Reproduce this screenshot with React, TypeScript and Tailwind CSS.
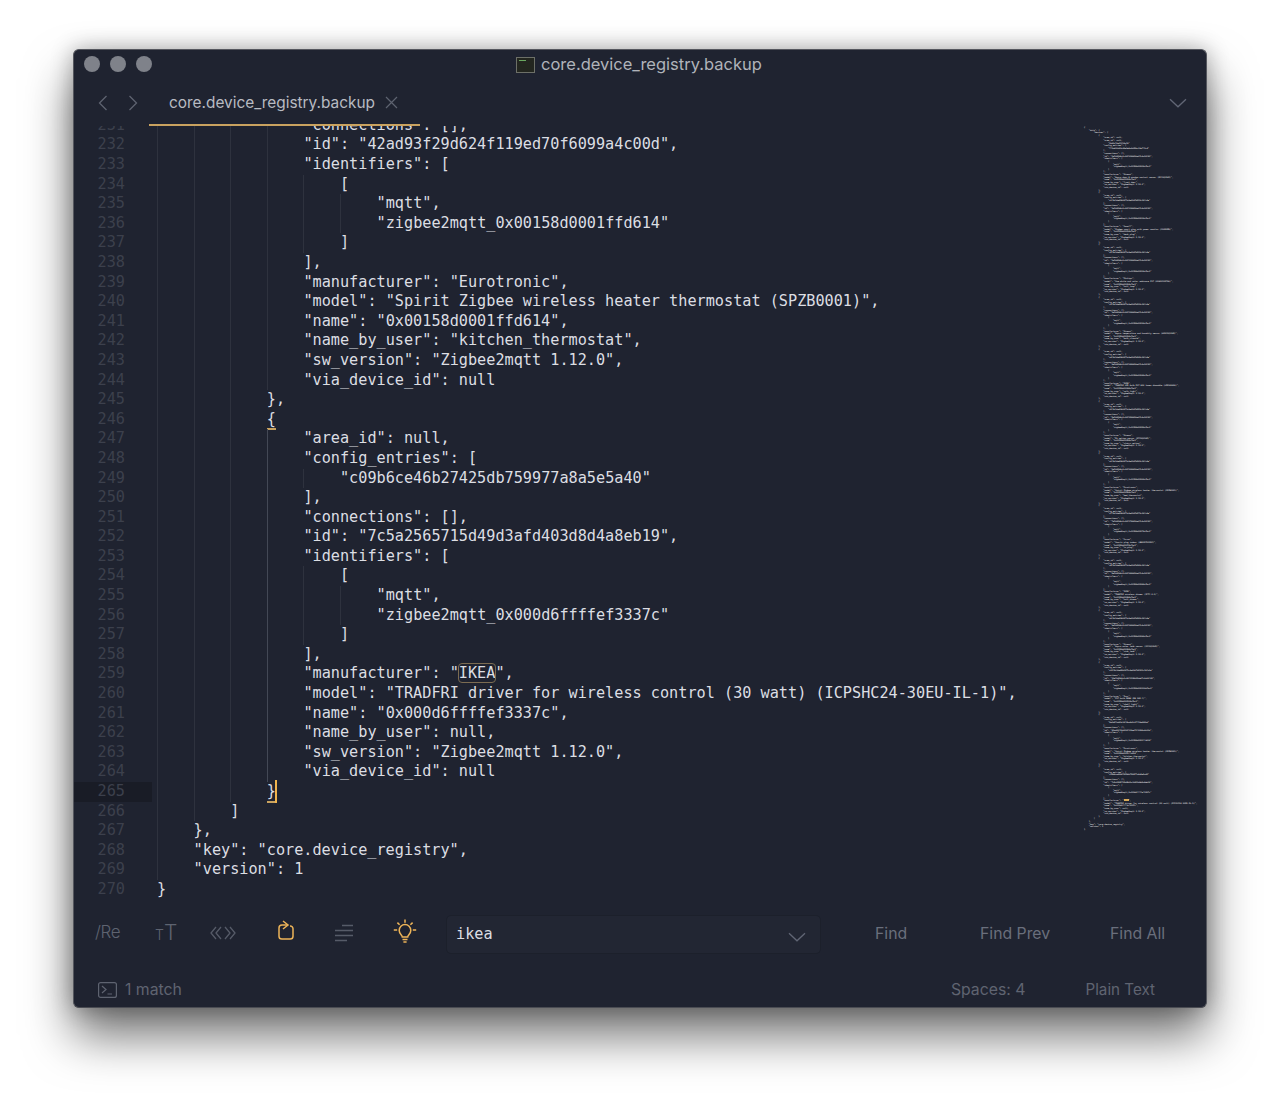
import React from 'react';

type Line = { indent: number; text: string };

interface Device {
  config: string;
  id: string;
  ident: string;
  manufacturer: string;
  model: string;
  name: string;
  byUser: string;
  version: string;
}

const filler: [string, string, string][] = [
  ['Xiaomi', 'Aqara door & window contact sensor (MCCGQ11LM)', 'front_door'],
  ['Sonoff', 'Zigbee smart plug with power monitor (S26R2ZB)', 'desk_plug'],
  ['Philips', 'Hue white and color ambiance E27 (9290012573A)', 'hall_lamp'],
  ['Xiaomi', 'Aqara temperature and humidity sensor (WSDCGQ11LM)', 'bath_climate'],
  ['IKEA', 'TRADFRI LED bulb E27 806 lumen dimmable (LED1836G9)', 'sofa_light'],
  ['Xiaomi', 'Mi motion sensor (RTCGQ01LM)', 'stairs_motion'],
  ['Eurotronic', 'Spirit Zigbee wireless heater thermostat (SPZB0001)', 'bed_thermostat'],
  ['Osram', 'Smart+ plug indoor (AB3257001NJ)', 'tv_plug'],
  ['IKEA', 'TRADFRI wireless dimmer (ICTC-G-1)', 'hall_dimmer'],
  ['Xiaomi', 'Aqara water leak sensor (SJCGQ11LM)', 'sink_leak'],
  ['Innr', 'E27 bulb RGBW (RB 285 C)', 'shelf_light'],
];

const devices: Device[] = [
  ...filler.map(([manufacturer, model, byUser], i) => ({
    config: `a${i}f4c1de83b2471c9e60d7b5${i}2c18fa3e`,
    id: `${i}e7d40b9a1c64f2${i}8b35de07c9a16f42`,
    ident: `zigbee2mqtt_0x00158d000${i}4a7bc2`,
    manufacturer,
    model,
    name: `0x00158d000${i}4a7bc2`,
    byUser: `"${byUser}"`,
    version: 'Zigbee2mqtt 1.12.0',
  })),
];
devices[11] = {
  config: '5e1d07ab93c24f6ba8d2c37f10e946bd',
  id: '42ad93f29d624f119ed70f6099a4c00d',
  ident: 'zigbee2mqtt_0x00158d0001ffd614',
  manufacturer: 'Eurotronic',
  model: 'Spirit Zigbee wireless heater thermostat (SPZB0001)',
  name: '0x00158d0001ffd614',
  byUser: '"kitchen_thermostat"',
  version: 'Zigbee2mqtt 1.12.0',
};
devices[12] = {
  config: 'c09b6ce46b27425db759977a8a5e5a40',
  id: '7c5a2565715d49d3afd403d8d4a8eb19',
  ident: 'zigbee2mqtt_0x000d6ffffef3337c',
  manufacturer: 'IKEA',
  model: 'TRADFRI driver for wireless control (30 watt) (ICPSHC24-30EU-IL-1)',
  name: '0x000d6ffffef3337c',
  byUser: 'null',
  version: 'Zigbee2mqtt 1.12.0',
};

const deviceLines = (d: Device, last: boolean): Line[] => [
  { indent: 12, text: '{' },
  { indent: 16, text: '"area_id": null,' },
  { indent: 16, text: '"config_entries": [' },
  { indent: 20, text: `"${d.config}"` },
  { indent: 16, text: '],' },
  { indent: 16, text: '"connections": [],' },
  { indent: 16, text: `"id": "${d.id}",` },
  { indent: 16, text: '"identifiers": [' },
  { indent: 20, text: '[' },
  { indent: 24, text: '"mqtt",' },
  { indent: 24, text: `"${d.ident}"` },
  { indent: 20, text: ']' },
  { indent: 16, text: '],' },
  { indent: 16, text: `"manufacturer": "${d.manufacturer}",` },
  { indent: 16, text: `"model": "${d.model}",` },
  { indent: 16, text: `"name": "${d.name}",` },
  { indent: 16, text: `"name_by_user": ${d.byUser},` },
  { indent: 16, text: `"sw_version": "${d.version}",` },
  { indent: 16, text: '"via_device_id": null' },
  { indent: 12, text: last ? '}' : '},' },
];

const lines: Line[] = [
  { indent: 0, text: '{' },
  { indent: 4, text: '"data": {' },
  { indent: 8, text: '"devices": [' },
  { indent: 12, text: '{' },
  { indent: 16, text: '"area_id": null,' },
  ...deviceLines(devices[0], false).slice(1, 3),
  { indent: 20, text: '"7f3ab10d92c44e1e8a6d05bc31e7f2c4"' },
  ...deviceLines(devices[0], false).slice(4),
  ...devices.slice(1).flatMap((d, i) => deviceLines(d, i === devices.length - 2)),
  { indent: 8, text: ']' },
  { indent: 4, text: '},' },
  { indent: 4, text: '"key": "core.device_registry",' },
  { indent: 4, text: '"version": 1' },
  { indent: 0, text: '}' },
];

// keep file length at 270 whatever the first block ends up as
while (lines.length < 270) lines.splice(6, 0, { indent: 20, text: '"2b90c7de11f04a7d"' });

const FIRST_VISIBLE = 231;
const ACTIVE = 265;

const CodeText = ({ no, text }: { no: number; text: string }) => {
  if (no === 246) {
    return <span className="inline-block h-[20px] border-b-2 border-[#c9a25f] leading-[19px]">{text}</span>;
  }
  if (no === ACTIVE) {
    return (
      <span className="relative inline-block h-[21px] border-b-2 border-[#c9a25f] leading-[19px]">
        {text}
        <span className="absolute right-[-1px] top-[-2px] h-[23px] w-[2px] bg-[#f0b44e]" />
      </span>
    );
  }
  if (no === 259) {
    return (
      <>
        {'"manufacturer": "'}
        <span className="rounded-[3px] outline outline-1 outline-[#7c6c52]">IKEA</span>
        {'",'}
      </>
    );
  }
  return <>{text}</>;
};

const CodeRow = ({ line, no }: { line: Line; no: number }) => {
  const levels = Array.from({ length: line.indent / 4 });
  return (
    <div className="flex h-[19.6px] leading-[19.6px] whitespace-pre">
      <div
        className={`w-[78px] shrink-0 pr-[27px] text-right text-[#3c404c] ${no === ACTIVE ? 'bg-[#191c26]' : ''}`}
      >
        {no}
      </div>
      <div className="w-[5px] shrink-0" />
      {levels.map((_, i) => (
        <span
          key={i}
          className={`h-full w-[36.6px] shrink-0 border-l ${
            i === 3 && no > 246 && no < 265 ? 'border-[#434855]' : 'border-[#2e323e]'
          }`}
        />
      ))}
      <span>
        <CodeText no={no} text={line.text} />
      </span>
    </div>
  );
};

const Minimap = () => (
  <div aria-hidden className="w-[122px] shrink-0 font-['DejaVu_Sans_Mono',monospace] text-[2px] text-white">
    {lines.map((l, i) => (
      <div key={i} className="h-[2.62px] leading-[2.62px] whitespace-pre">
        {' '.repeat(l.indent)}
        {i + 1 === 259 ? (
          <>
            {'"manufacturer": "'}
            <span className="bg-[#d9a956] text-[#d9a956]">IKEA</span>
            {'",'}
          </>
        ) : (
          l.text
        )}
      </div>
    ))}
  </div>
);

const Chevron = ({ className = '' }: { className?: string }) => (
  <svg width="18" height="10" viewBox="0 0 18 10" fill="none" stroke="#616675" strokeWidth="1.3" className={className}>
    <path d="M1 1.2 9 8.8 17 1.2" />
  </svg>
);

const ToolIcons = () => (
  <>
    <span className="w-[24px] text-[17px] font-light tracking-[-0.4px] text-[#5e6370]">/Re</span>
    <span className="ml-[36px] flex w-[20px] items-baseline font-light text-[#5e6370]">
      <span className="text-[14px]">T</span>
      <span className="text-[21px] leading-none">T</span>
    </span>
    <svg width="26" height="16" viewBox="0 0 26 16" fill="none" stroke="#565b68" strokeWidth="1.3" className="ml-[35px]">
      <path d="M6 2 1 8l5 6M11 2 6 8l5 6M15 2l5 6-5 6M20 2l5 6-5 6" />
    </svg>
    <svg width="18" height="21" viewBox="0 0 18 21" fill="none" stroke="#edb458" strokeWidth="1.5" className="ml-[41px] mb-[5px]">
      <path d="M13 6h.2A2.8 2.8 0 0 1 16 8.8v7.4a2.8 2.8 0 0 1-2.8 2.8H4.8A2.8 2.8 0 0 1 2 16.2V8a3 3 0 0 1 3-3h6" />
      <path d="M6 1l5 4-5 4" />
    </svg>
    <svg width="18" height="18" viewBox="0 0 18 18" fill="none" stroke="#565b68" strokeWidth="1.3" className="ml-[40px]">
      <path d="M7 1.5h11M0 6.5h18M0 11.5h18M0 16.5h12" />
    </svg>
    <svg width="24" height="25" viewBox="0 0 24 25" fill="none" stroke="#edb458" strokeWidth="1.5" className="ml-[40px] mb-[3px]">
      <path d="M12 .5v3.2M4.4 3.6l2.2 2.2M19.6 3.6l-2.2 2.2M.8 11h3.4M19.8 11h3.4" />
      <path d="M9.3 18c0-2-3.1-3-3.1-6.6a5.8 5.8 0 0 1 11.6 0c0 3.6-3.1 4.6-3.1 6.6Z" />
      <path d="M9.5 20.4h5M10.4 23h3.2" />
    </svg>
  </>
);

export default function App() {
  const visible = lines.slice(FIRST_VISIBLE - 1, 270);

  return (
    <div className="min-h-[1105px] overflow-hidden bg-white px-[73px] pt-[49px] font-['Inter',sans-serif]">
      <div className="flex h-[959px] flex-col overflow-hidden rounded-[6px] border border-[#55575e] border-b-[#4a4c53] bg-[#1f2330] shadow-[0_28px_48px_rgba(0,0,0,0.55),0_0_22px_rgba(0,0,0,0.3)]">
        {/* title bar */}
        <div className="flex h-[33px] shrink-0 items-center pb-[4px] pl-[10px]">
          <div className="mb-[2px] flex w-[86px] shrink-0 gap-[10px]">
            <span className="h-[16px] w-[16px] rounded-full bg-[#7f828a]" />
            <span className="h-[16px] w-[16px] rounded-full bg-[#7f828a]" />
            <span className="h-[16px] w-[16px] rounded-full bg-[#7f828a]" />
          </div>
          <div className="ml-[346px] flex items-center gap-[6px] text-[16.5px] text-[#b0b3ba]">
            <span className="flex h-[16px] w-[19px] items-start border border-[#6d7068] bg-[#23261f] px-[2px] pt-[2px]">
              <span className="h-[1px] w-[7px] bg-[#6aa860]" />
            </span>
            core.device_registry.backup
          </div>
        </div>

        {/* tabs */}
        <div className="flex h-[43px] shrink-0 items-center">
          <svg width="10" height="16" viewBox="0 0 10 16" fill="none" stroke="#5e6370" strokeWidth="1.3" className="mb-[4px] ml-[24px]">
            <path d="M8.5 1 1.5 8l7 7" />
          </svg>
          <svg width="10" height="16" viewBox="0 0 10 16" fill="none" stroke="#5e6370" strokeWidth="1.3" className="mb-[4px] ml-[20px]">
            <path d="M1.5 1l7 7-7 7" />
          </svg>
          <div className="ml-[11px] flex h-full w-[271px] items-center border-b-[2.5px] border-[#c9a25f] pb-[2px] pl-[20px] text-[15.4px] text-[#b8bbc2]">
            core.device_registry.backup
            <svg width="13" height="13" viewBox="0 0 13 13" fill="none" stroke="#5e6370" strokeWidth="1.2" className="ml-[10px]">
              <path d="M1 1l11 11M12 1 1 12" />
            </svg>
          </div>
          <Chevron className="mb-[4px] ml-auto mr-[19px]" />
        </div>

        {/* editor */}
        <div className="flex min-h-0 flex-1 overflow-hidden text-[#dcdee3]">
          <div className="mt-[-10.2px] min-w-0 flex-1 font-['DejaVu_Sans_Mono',monospace] text-[15.2px]">
            {visible.map((line, i) => (
              <CodeRow key={i} line={line} no={FIRST_VISIBLE + i} />
            ))}
          </div>
          <Minimap />
        </div>

        {/* find panel */}
        <div className="flex h-[58px] shrink-0 items-center pl-[21px] text-[15.8px] whitespace-nowrap text-[#6a6f7c]">
          <ToolIcons />
          <div className="ml-[29px] mt-[2px] flex h-[39px] w-[375px] items-center rounded-[5px] border border-[#1c202b] bg-[#222633] pl-[9px] pr-[14px] font-['DejaVu_Sans_Mono',monospace] text-[15.2px] text-[#dcdee3]">
            ikea
            <Chevron className="ml-auto mt-[5px]" />
          </div>
          <span className="ml-[54px] mt-[2px] w-[33px]">Find</span>
          <span className="ml-[72px] mt-[2px] w-[70px]">Find Prev</span>
          <span className="ml-[60px] mt-[2px]">Find All</span>
        </div>

        {/* status bar */}
        <div className="flex h-[45px] shrink-0 items-center pl-[24px] pt-[11px] text-[15.8px] text-[#5f6471]">
          <svg width="19" height="16" viewBox="0 0 19 16" fill="none" stroke="#5e6370" strokeWidth="1.2">
            <rect x="0.6" y="0.6" width="17.8" height="14.8" rx="2" />
            <path d="M4 4l4 3.5L4 11M9.5 12h4.5" />
          </svg>
          <span className="ml-[8px]">1 match</span>
          <span className="ml-auto">Spaces: 4</span>
          <span className="ml-[60px] mr-[51px] text-[15.2px]">Plain Text</span>
        </div>
      </div>
    </div>
  );
}
